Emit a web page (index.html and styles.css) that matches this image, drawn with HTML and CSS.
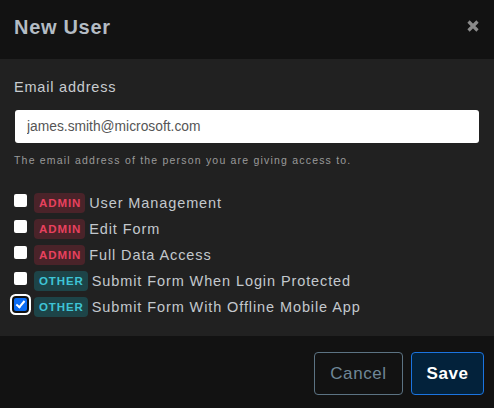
FILE: index.html
```html
<!DOCTYPE html>
<html>
<head>
<meta charset="utf-8">
<link rel="stylesheet" href="styles.css">
</head>
<body>
<div class="modal">
  <header class="modal-header">
    <h1 class="title">New User</h1>
    <button class="close" aria-label="Close">
      <svg width="12" height="12" viewBox="0 0 12 12"><path d="M1.5 1.5 L10.5 10.5 M10.5 1.5 L1.5 10.5" stroke="#8a8a8a" stroke-width="3.2" stroke-linecap="butt"/></svg>
    </button>
  </header>
  <section class="modal-body">
    <label class="field-label" for="email">Email address</label>
    <input id="email" class="input" type="text" value="james.smith@microsoft.com">
    <p class="help">The email address of the person you are giving access to.</p>
    <ul class="perms">
      <li class="perm"><input type="checkbox" class="cb"><span class="badge admin">ADMIN</span><span class="perm-label">User Management</span></li>
      <li class="perm"><input type="checkbox" class="cb"><span class="badge admin">ADMIN</span><span class="perm-label">Edit Form</span></li>
      <li class="perm"><input type="checkbox" class="cb"><span class="badge admin">ADMIN</span><span class="perm-label">Full Data Access</span></li>
      <li class="perm"><input type="checkbox" class="cb"><span class="badge other">OTHER</span><span class="perm-label">Submit Form When Login Protected</span></li>
      <li class="perm"><input type="checkbox" class="cb focused" checked><span class="badge other">OTHER</span><span class="perm-label">Submit Form With Offline Mobile App</span></li>
    </ul>
  </section>
  <footer class="modal-footer">
    <button class="btn btn-cancel">Cancel</button>
    <button class="btn btn-save">Save</button>
  </footer>
</div>
</body>
</html>
```

FILE: styles.css
```css
* { box-sizing: border-box; }
html, body { margin: 0; padding: 0; }
body {
  width: 494px;
  height: 408px;
  background: #121212;
  font-family: "Liberation Sans", Arial, sans-serif;
  overflow: hidden;
}
.modal { display: flex; flex-direction: column; height: 408px; }
.modal-header {
  height: 59px;
  background: #121212;
  display: flex;
  align-items: center;
  justify-content: space-between;
  padding: 0 15px 0 14px;
}
.title {
  margin: 0;
  font-size: 20px;
  font-weight: bold;
  color: #b4bcc4;
  letter-spacing: 0.7px;
  padding-bottom: 4px;
}
.close {
  background: none;
  border: 0;
  padding: 0;
  width: 12px;
  height: 12px;
  margin-bottom: 8px;
  display: flex;
}
.modal-body {
  background: #212121;
  height: 277px;
  padding: 20px 15px 0 14px;
  display: flex;
  flex-direction: column;
}
.field-label {
  font-size: 14.5px;
  color: #c8ccd0;
  letter-spacing: 0.8px;
  line-height: 17px;
}
.input {
  margin-top: 14px;
  margin-left: 1px;
  height: 33px;
  width: 464px;
  border: 0;
  border-radius: 3px;
  background: #fff;
  padding: 0 12px;
  font-family: "Liberation Sans", Arial, sans-serif;
  font-size: 13.8px;
  color: #555;
  outline: none;
}
.help {
  margin: 11px 0 0 0;
  font-size: 10.5px;
  color: #9a9a9a;
  letter-spacing: 1.2px;
  line-height: 13px;
}
.perms {
  list-style: none;
  margin: 26px 0 0 0;
  padding: 0;
  display: flex;
  flex-direction: column;
  gap: 6px;
}
.perm {
  display: flex;
  align-items: center;
  height: 20px;
}
.cb {
  margin: 1px 7px 0 0;
  align-self: flex-start;
  width: 13px;
  height: 13px;
  appearance: none;
  -webkit-appearance: none;
  background: #fff;
  border-radius: 2px;
  position: relative;
}
.cb:checked {
  background: #0b6cf5;
}
.cb.focused {
  box-shadow: 0 0 0 2px #111, 0 0 0 4px #fff;
  border-radius: 2px;
}
.cb:checked::after {
  content: "";
  position: absolute;
  left: 4px;
  top: 1px;
  width: 3px;
  height: 7px;
  border: solid #fff;
  border-width: 0 2px 2px 0;
  transform: rotate(40deg);
}
.badge {
  height: 20px;
  line-height: 20px;
  padding: 0 4px 0 5px;
  border-radius: 4px;
  font-size: 11.5px;
  font-weight: bold;
  letter-spacing: 0.9px;
  margin-right: 4px;
}
.badge.admin { background: #4a2329; color: #e8415e; }
.badge.other { background: #1d4448; color: #3ec4d6; }
.perm-label {
  font-size: 14.5px;
  color: #c3c8cd;
  letter-spacing: 0.9px;
}
.modal-footer {
  flex: 1;
  background: #121212;
  display: flex;
  justify-content: flex-end;
  align-items: flex-start;
  padding: 16px 10px 0 0;
  gap: 8px;
}
.btn {
  height: 43px;
  border-radius: 4px;
  font-family: "Liberation Sans", Arial, sans-serif;
  font-size: 17px;
  letter-spacing: 0.6px;
  padding: 0;
}
.btn-cancel {
  width: 89px;
  background: transparent;
  border: 1px solid #5c7383;
  color: #6f8797;
}
.btn-save {
  width: 73px;
  background: #03223b;
  border: 1px solid #1b74e0;
  color: #fff;
  font-weight: bold;
}
```
